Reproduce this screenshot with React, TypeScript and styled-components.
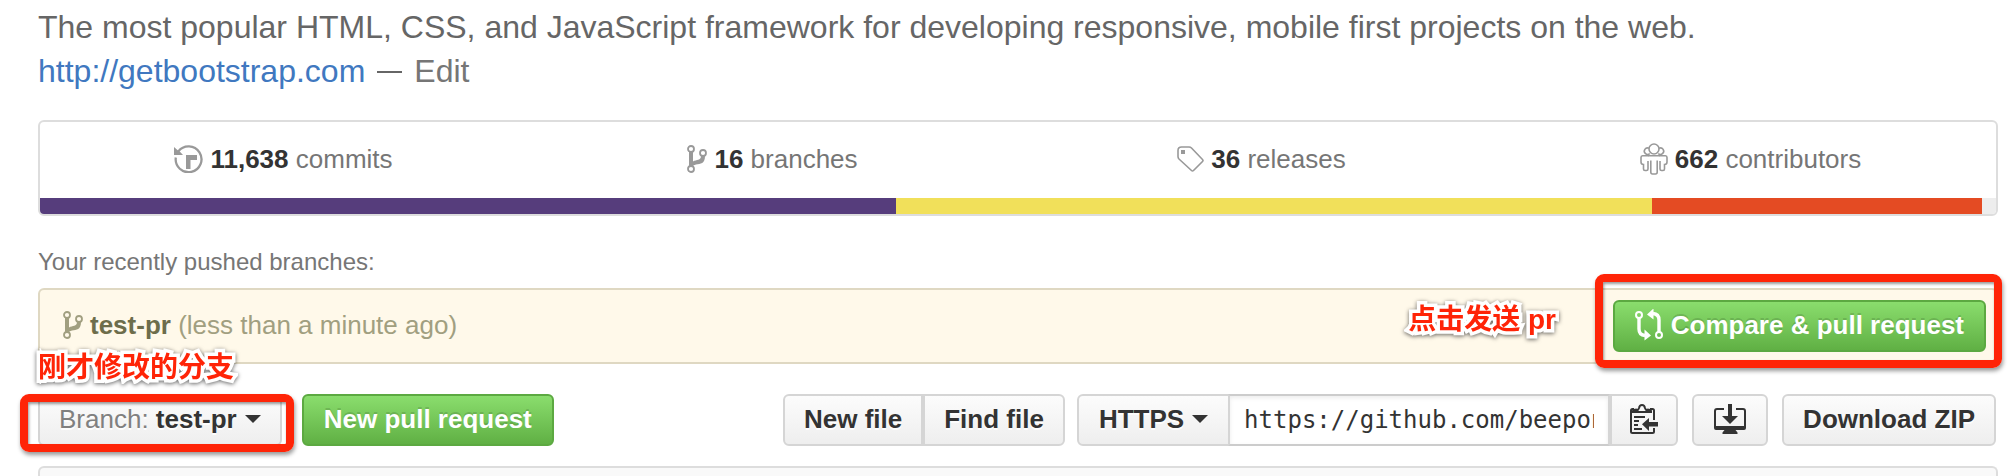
import React from 'react';
import styled, { createGlobalStyle, css } from 'styled-components';

const GlobalStyle = createGlobalStyle`
  *, *::before, *::after { box-sizing: border-box; }
  body {
    margin: 0;
    background: #fff;
    color: #333;
    font-family: "Liberation Sans", Arial, "Noto Sans CJK SC", sans-serif;
    font-size: 26px;
    line-height: 36px;
  }
  a { text-decoration: none; }
`;

const Page = styled.main`
  display: flex;
  flex-direction: column;
  min-height: 100vh;
  padding: 5px 12px 0 38px;
`;

const Description = styled.header`
  margin-bottom: 27px;
  color: #666;
  font-size: 32px;
  line-height: 44px;

  p { margin: 0; }
`;

const SiteLink = styled.a`
  color: #4078c0;
`;

const EditLink = styled.a`
  margin-left: 12px;
  color: #767676;
`;

const Dash = styled.span`
  display: inline-block;
  width: 25px;
  height: 2px;
  margin-left: 12px;
  vertical-align: 9px;
  background: #666;
`;

const Summary = styled.section`
  border: 2px solid #ddd;
  border-radius: 6px;
  overflow: hidden;
`;

const Stats = styled.ul`
  display: grid;
  grid-template-columns: repeat(4, 1fr);
  margin: 0;
  padding: 0;
  list-style: none;
`;

const Stat = styled.li`
  display: flex;
  justify-content: center;
  height: 76px;
  padding: 0 2px 2px 0;
`;

const StatLink = styled.a`
  display: flex;
  align-items: center;
  gap: 7px;
  color: #767676;

  strong { color: #333; }
  svg { color: #999; }
`;

const LanguageBar = styled.div`
  display: flex;
  height: 16px;
  background: #ededed;
`;

const Language = styled.span<{ $color: string; $share: number }>`
  width: ${(p) => p.$share}%;
  background: ${(p) => p.$color};
`;

const SectionTitle = styled.h2`
  margin: 30px 0 10px;
  color: #767676;
  font-size: 24px;
  font-weight: 400;
  line-height: 32px;
`;

const PushedBranch = styled.section`
  position: relative;
  display: flex;
  align-items: center;
  justify-content: space-between;
  height: 76px;
  margin-bottom: 30px;
  padding: 0 10px 0 23px;
  border: 2px solid #dfd8c2;
  border-radius: 6px;
  background: #fff9ea;
`;

const BranchInfo = styled.div`
  display: flex;
  align-items: center;
  gap: 7px;
  padding-bottom: 2px;
  color: #a19f80;

  strong { color: #6d6d4b; }
`;

const Toolbar = styled.div`
  display: flex;
  align-items: center;
  justify-content: space-between;
  margin-bottom: 20px;
  padding-right: 2px;
`;

const Group = styled.div<{ $gap: number }>`
  display: flex;
  align-items: center;
  gap: ${(p) => p.$gap}px;
`;

const Joined = styled.div`
  display: flex;

  > * + * { margin-left: -2px; }
  > :not(:first-child) { border-top-left-radius: 0; border-bottom-left-radius: 0; }
  > :not(:last-child) { border-top-right-radius: 0; border-bottom-right-radius: 0; }
`;

const Button = styled.button<{ $primary?: boolean; $pad?: number }>`
  display: flex;
  align-items: center;
  gap: 8px;
  height: 52px;
  margin: 0;
  padding: 0 ${(p) => p.$pad ?? 19}px 2px;
  border: 2px solid #d5d5d5;
  border-radius: 6px;
  background: linear-gradient(#fcfcfc, #eee);
  color: #333;
  font: inherit;
  font-weight: 700;
  text-shadow: 0 2px 0 rgba(255, 255, 255, 0.9);
  white-space: nowrap;
  cursor: pointer;

  ${(p) =>
    p.$primary &&
    css`
      padding: 0 20px 2px;
      border-color: #5ca941;
      background: linear-gradient(#8add6d, #60b044);
      color: #fff;
      text-shadow: 0 -2px 0 rgba(0, 0, 0, 0.15);
    `}
`;

const Muted = styled.span`
  color: #808080;
  font-weight: 400;
`;

const Caret = styled.span`
  border: 8px solid transparent;
  border-top-color: currentColor;
  border-bottom: 0;
`;

const UrlField = styled.input`
  width: 382px;
  height: 52px;
  padding: 0 14px;
  border: 2px solid #ccc;
  border-right-color: #d5d5d5;
  border-left-color: #d5d5d5;
  background: #fff;
  box-shadow: inset 0 2px 4px rgba(0, 0, 0, 0.08);
  color: #333;
  font: 24px "DejaVu Sans Mono", monospace;
  outline: none;
`;

const FileList = styled.section`
  flex: 1;
  border: 2px solid #ddd;
  border-bottom: 0;
  border-radius: 6px 6px 0 0;
  background: #f9f9f9;
`;

const Highlighted = styled.div`
  position: relative;
`;

const RedFrame = styled.span<{ $inset: string }>`
  position: absolute;
  inset: ${(p) => p.$inset};
  border: 8px solid #ff2407;
  border-radius: 9px;
  box-shadow: 1px 3px 4px rgba(0, 0, 0, 0.4), inset 1px 2px 3px rgba(0, 0, 0, 0.4);
  pointer-events: none;
`;

const Note = styled.span<{ $left?: string; $right?: string; $top: number }>`
  position: absolute;
  top: ${(p) => p.$top}px;
  left: ${(p) => p.$left ?? 'auto'};
  right: ${(p) => p.$right ?? 'auto'};
  color: #ff2407;
  font-family: "Liberation Sans", "Noto Sans CJK SC", sans-serif;
  font-size: 28px;
  font-weight: 700;
  line-height: 36px;
  white-space: nowrap;
  -webkit-text-stroke: 7px #fff;
  paint-order: stroke fill;
  filter: drop-shadow(0 1px 2px rgba(0, 0, 0, 0.6));
`;

const HistoryIcon = () => (
  <svg width="29" height="28" viewBox="0 0 29 28" fill="currentColor" aria-hidden="true">
    <path
      d="M4.3 6.5A12.9 12.9 0 1 1 1.8 12.5"
      fill="none"
      stroke="currentColor"
      strokeWidth="2.3"
    />
    <path d="M0 2v8h9L6.2 7 3.4 5z" />
    <path d="M12 10h11v5h-6.5v9H12z" />
  </svg>
);

const BranchIcon = () => (
  <svg width="20" height="28" viewBox="0 0 20 28" fill="none" stroke="currentColor" strokeWidth="1.8" aria-hidden="true">
    <circle cx="4" cy="4" r="3" />
    <circle cx="4" cy="24" r="3" />
    <circle cx="16" cy="8" r="3" />
    <path d="M2 7h4v9.5c3.5-2 8-1 8-5.5h4c0 8-4.5 7.500-9 8.500-2 .5-3 1-3 2H2z" fill="currentColor" stroke="none" />
  </svg>
);

const TagIcon = () => (
  <svg width="27" height="26" viewBox="0 0 27 26" fill="none" stroke="currentColor" aria-hidden="true">
    <path
      d="M4.5 1H12q1.500 0 2.500 1l11 11.500q1 1 0 2l-9 9q-1 1-2 0L2 13q-1-1-1-2.500v-6Q1 1 4.500 1z"
      strokeWidth="1.6"
    />
    <path d="M4 4h4v4H4z" fill="currentColor" stroke="none" />
  </svg>
);

const PeopleIcon = () => (
  <svg width="28" height="32" viewBox="0 0 28 32" fill="none" stroke="currentColor" strokeWidth="1.6" aria-hidden="true">
    <circle cx="14" cy="6" r="5" />
    <path d="M9 5.200a3.300 3.300 0 1 0 .8 5.500M19 5.200a3.300 3.300 0 1 1-.8 5.500" />
    <path d="M8.500 12.800h-6Q1 12.800 1 14.500V19q0 2.500 2.500 2.500V26q0 1.500 1.500 1.500h1.500Q8 27.500 8 26v-8" />
    <path d="M19.500 12.800h6q1.500 0 1.500 1.700V19q0 2.500-2.500 2.500V26q0 1.500-1.500 1.500h-1.500Q20 27.500 20 26v-8" />
    <path d="M8 12.800h12M10.800 17.500V29q0 2 1.700 2h3q1.700 0 1.700-2V17.500" />
  </svg>
);

const CompareIcon = () => (
  <svg width="28" height="32" viewBox="0 0 28 32" fill="none" stroke="currentColor" strokeWidth="2" aria-hidden="true">
    <circle cx="4" cy="6" r="3" />
    <circle cx="24" cy="26" r="3" />
    <path d="M4 9v11q0 6 6 6.500" strokeWidth="3.4" />
    <path d="M24 23V11q0-6-6-6.500" strokeWidth="3.4" />
    <path d="M9.500 20.500v11l6.500-5zM18.500-.500v11l-6.500-5z" fill="currentColor" stroke="none" />
  </svg>
);

const ClipboardIcon = () => (
  <svg width="28" height="30" viewBox="0 0 28 30" fill="none" stroke="currentColor" strokeWidth="2" aria-hidden="true">
    <path d="M4 5H2.500Q1 5 1 6.500v21Q1 29 2.500 29h20q1.500 0 1.500-1.500V24M20 5h2.500Q24 5 24 6.500V16" />
    <path d="M7 6q1.500 0 2-2 .5-3 3-3t3 3q.5 2 2 2" />
    <path d="M2 9V6.500Q3 4.500 6.500 4.500L9 7h6l2.500-2.500Q21 4.500 22 6.500V9z" fill="currentColor" stroke="none" />
    <path d="M4 13h11M4 17h5M4 21h4M4 25h8" />
    <path d="M28 18v4.500h-9V27l-7-6.700 7-6.300v4z" fill="currentColor" stroke="none" />
  </svg>
);

const DesktopIcon = () => (
  <svg width="32" height="30" viewBox="0 0 32 30" fill="none" stroke="currentColor" strokeWidth="2" aria-hidden="true">
    <path d="M10 5H3Q1 5 1 7v16M22 5h7q2 0 2 2v16" />
    <path d="M0 22h32v2q0 2-2 2h-8.500l2 2.500V30h-15v-1.500l2-2.500H2q-2 0-2-2z" fill="currentColor" stroke="none" />
    <path d="M14 0h4v12h6l-8 8-8-8h6z" fill="currentColor" stroke="none" />
  </svg>
);

const stats = [
  { icon: <HistoryIcon />, count: '11,638', label: 'commits' },
  { icon: <BranchIcon />, count: '16', label: 'branches' },
  { icon: <TagIcon />, count: '36', label: 'releases' },
  { icon: <PeopleIcon />, count: '662', label: 'contributors' },
];

const languages = [
  { name: 'CSS', color: '#563d7c', share: 43.76 },
  { name: 'JavaScript', color: '#f1e05a', share: 38.65 },
  { name: 'HTML', color: '#e44b23', share: 16.87 },
];

export default function App() {
  return (
    <>
      <GlobalStyle />
      <Page>
        <Description>
          <p>The most popular HTML, CSS, and JavaScript framework for developing responsive, mobile first projects on the web.</p>
          <p>
            <SiteLink href="#site">http://getbootstrap.com</SiteLink>
            <Dash />
            <EditLink href="#edit">Edit</EditLink>
          </p>
        </Description>

        <Summary>
          <Stats>
            {stats.map((s) => (
              <Stat key={s.label}>
                <StatLink href={`#${s.label}`}>
                  {s.icon}
                  <span><strong>{s.count}</strong> {s.label}</span>
                </StatLink>
              </Stat>
            ))}
          </Stats>
          <LanguageBar>
            {languages.map((l) => (
              <Language key={l.name} $color={l.color} $share={l.share} />
            ))}
          </LanguageBar>
        </Summary>

        <SectionTitle>Your recently pushed branches:</SectionTitle>
        <PushedBranch>
          <BranchInfo>
            <BranchIcon />
            <span><strong>test-pr</strong> (less than a minute ago)</span>
          </BranchInfo>
          <Highlighted>
            <Button type="button" $primary>
              <CompareIcon />
              Compare &amp; pull request
            </Button>
            <RedFrame $inset="-26px -16px -16px -18px" />
          </Highlighted>
          <Note $top={60} $left="-2px">刚才修改的分支</Note>
          <Note $top={12} $right="440px">点击发送 pr</Note>
        </PushedBranch>

        <Toolbar>
          <Group $gap={20}>
            <Highlighted>
              <Button type="button" aria-haspopup="menu">
                <span><Muted>Branch:</Muted> test-pr</span>
                <Caret />
              </Button>
              <RedFrame $inset="0 -12px -6px -18px" />
            </Highlighted>
            <Button type="button" $primary>New pull request</Button>
          </Group>
          <Group $gap={14}>
            <Group $gap={12}>
              <Joined>
                <Button type="button">New file</Button>
                <Button type="button">Find file</Button>
              </Joined>
              <Joined>
                <Button type="button" $pad={20} aria-haspopup="menu">
                  HTTPS
                  <Caret />
                </Button>
                <UrlField aria-label="Clone URL" readOnly value="https://github.com/beepony/bootstrap.git" />
                <Button type="button" $pad={18} aria-label="Copy to clipboard"><ClipboardIcon /></Button>
              </Joined>
            </Group>
            <Button type="button" $pad={20} aria-label="Clone in desktop"><DesktopIcon /></Button>
            <Button type="button">Download ZIP</Button>
          </Group>
        </Toolbar>

        <FileList aria-label="Files" />
      </Page>
    </>
  );
}
